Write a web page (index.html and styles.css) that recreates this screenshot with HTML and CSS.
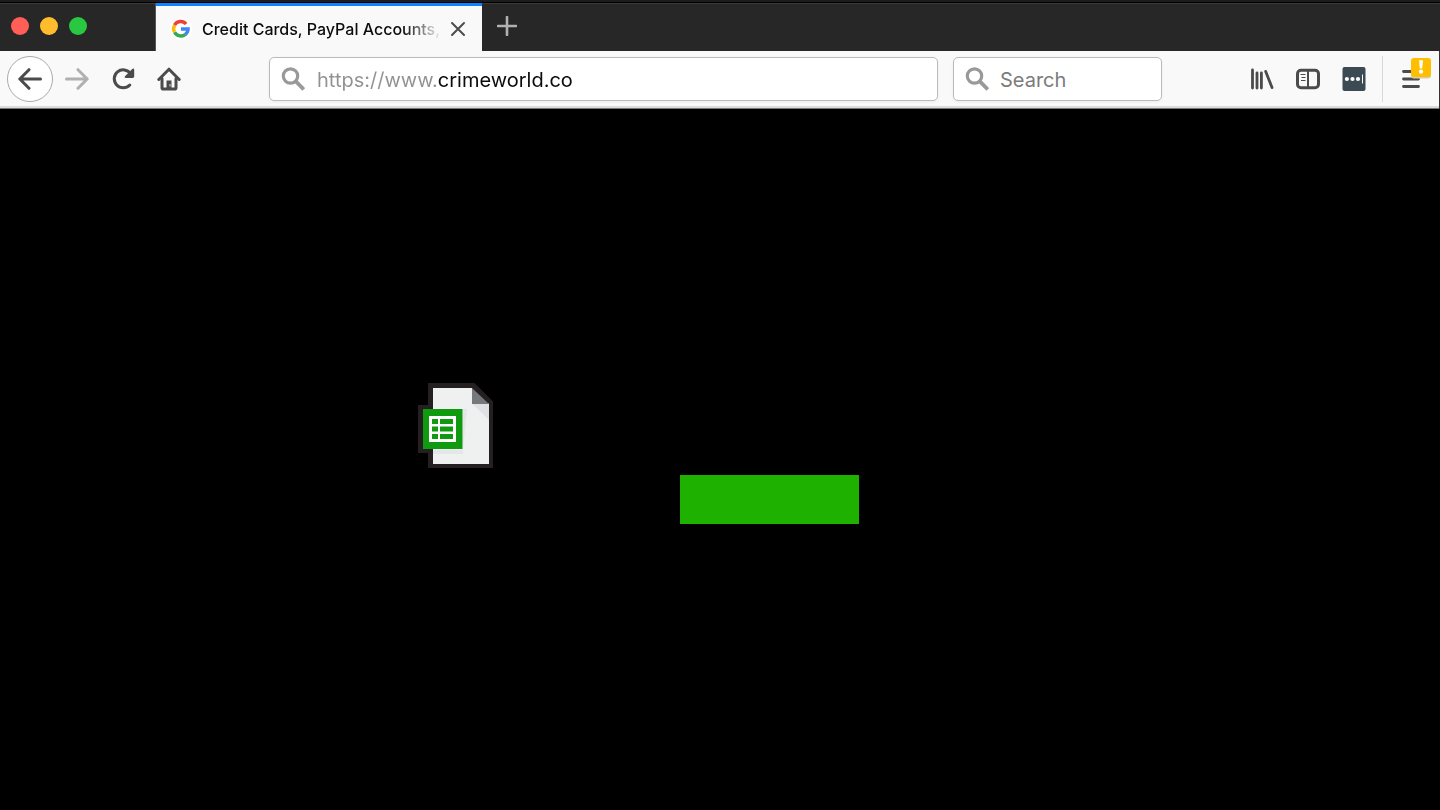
FILE: index.html
```html
<!DOCTYPE html>
<html lang="en">
<head>
<meta charset="utf-8">
<title>Credit Cards, PayPal Accounts</title>
<link rel="stylesheet" href="styles.css">
</head>
<body>
<div class="browser">
  <header class="tab-strip">
    <div class="window-controls">
      <button class="light light-close" aria-label="Close window"></button>
      <button class="light light-minimize" aria-label="Minimize window"></button>
      <button class="light light-zoom" aria-label="Zoom window"></button>
    </div>
    <div class="tab">
      <svg class="favicon" viewBox="0 0 22 22" aria-hidden="true">
        <circle cx="11" cy="11" r="11" fill="#fff"/>
        <g fill="none" stroke-width="3.4">
          <path d="M4.5 7.1A7.1 7.1 0 0 1 16.1 6" stroke="#ea4335"/>
          <path d="M4.6 14.2A7.1 7.1 0 0 1 4.6 7.1" stroke="#fbbc05"/>
          <path d="M15.6 16.2A7.1 7.1 0 0 1 4.6 14.2" stroke="#34a853"/>
          <path d="M11 11h7.1A7.1 7.1 0 0 1 15.4 16.3" stroke="#4285f4"/>
        </g>
      </svg>
      <span class="tab-title">Credit Cards, PayPal Accounts,</span>
      <button class="tab-close" aria-label="Close tab">
        <svg viewBox="0 0 16 16" width="16" height="16"><path d="M2 2l12 12M14 2L2 14" stroke="#4c4c4c" stroke-width="2" stroke-linecap="round"/></svg>
      </button>
    </div>
    <button class="new-tab" aria-label="New tab">
      <svg viewBox="0 0 20 20" width="20" height="20"><path d="M10 1v18M1 10h18" stroke="#b1b1b1" stroke-width="2.6" stroke-linecap="round"/></svg>
    </button>
  </header>

  <nav class="toolbar">
    <div class="navigation">
      <button class="tool back" aria-label="Back">
        <svg viewBox="0 0 24 24" width="24" height="24" fill="none" stroke="#4b4b4b" stroke-width="3" stroke-linecap="round" stroke-linejoin="round"><path d="M22.500 12H2M11 2.700L1.800 12l9.200 9.300"/></svg>
      </button>
      <button class="tool" aria-label="Forward" disabled>
        <svg viewBox="0 0 24 24" width="24" height="24" fill="none" stroke="#b0b0b0" stroke-width="3" stroke-linecap="round" stroke-linejoin="round"><path d="M1.500 12H22M13 2.700l9.200 9.300-9.200 9.300"/></svg>
      </button>
      <button class="tool" aria-label="Reload">
        <svg viewBox="0 0 24 24" width="24" height="24"><path d="M19.500 6.500A9 9 0 1 0 18.800 18" fill="none" stroke="#4b4b4b" stroke-width="3" stroke-linecap="round"/><path d="M21.200 1.900q2-1 2 1v6.600q0 1.400-1.400 1.400h-7q-2.200-.2-.6-1.800z" fill="#4b4b4b"/></svg>
      </button>
      <button class="tool" aria-label="Home">
        <svg viewBox="0 0 24 24" width="24" height="24"><g fill="none" stroke="#4b4b4b" stroke-width="3" stroke-linecap="round" stroke-linejoin="round"><path d="M1.800 12.500L12 2.200l10.200 10.300"/><path d="M5 11.500v9.200q0 1.300 1.300 1.300h11.400q1.300 0 1.300-1.300v-9.200"/></g><path d="M9.500 22v-8.500h5V22z" fill="#4b4b4b"/><path d="M12.500 17h1v2.400h-1z" fill="#ddd"/></svg>
      </button>
    </div>
    <label class="field address">
      <svg class="lens" viewBox="0 0 24 24" width="24" height="24" fill="none" stroke="#999" stroke-width="3.2"><circle cx="9.500" cy="9" r="7.2"/><path d="M14.600 14.200l8.200 8.200" stroke-width="3.8"/></svg>
      <input class="url" type="text" aria-label="Address" value="https://www.crimeworld.co" spellcheck="false">
    </label>
    <label class="field search">
      <svg class="lens" viewBox="0 0 24 24" width="24" height="24" fill="none" stroke="#999" stroke-width="3.2"><circle cx="9.500" cy="9" r="7.2"/><path d="M14.600 14.200l8.200 8.200" stroke-width="3.8"/></svg>
      <input class="query" type="text" aria-label="Search" placeholder="Search">
    </label>
    <div class="extras">
      <button class="tool" aria-label="Library">
        <svg viewBox="0 0 24 22" width="24" height="22" fill="none" stroke="#4b4b4b" stroke-width="2.8" stroke-linecap="round"><path d="M2.500 2v18M7 5v15M11.400 5v15M15.700 3.400L22 19.600"/></svg>
      </button>
      <button class="tool" aria-label="Sidebars">
        <svg viewBox="0 0 24 22" width="24" height="22" fill="none" stroke="#4b4b4b"><rect x="1.500" y="2.300" width="21" height="17.400" rx="3.4" stroke-width="3"/><path d="M12 3v16" stroke-width="2"/><path d="M4.500 6.500h5M5.500 9.500h4M5 12.500h4.500" stroke-width="1.2"/></svg>
      </button>
      <button class="tool" aria-label="Password manager">
        <svg viewBox="0 0 24 24" width="24" height="24"><rect x=".5" width="23" height="24" rx="2" fill="#3c4a54"/><g fill="#fff"><circle cx="4.900" cy="12" r="2.1"/><circle cx="10.500" cy="12" r="2.1"/><circle cx="16" cy="12" r="2.1"/><path d="M20 7.500h1v9h-1z"/></g></svg>
      </button>
    </div>
    <div class="menu-area">
      <button class="tool menu" aria-label="Open menu">
        <svg viewBox="0 0 20 20" width="20" height="20" stroke="#4b4b4b" stroke-width="2.8" stroke-linecap="round"><path d="M2.500 2.500h15M2.500 10h15M2.500 17.500h15"/></svg>
        <svg class="badge" viewBox="0 0 22 22" width="22" height="22" aria-hidden="true"><rect x="1" y="2" width="20" height="19.500" rx="3" fill="#d8cdb0"/><rect x="1" y="1" width="20" height="19" rx="3" fill="#ffbf00"/><path d="M9 3.300h4l-.8 8.200H9.800z" fill="#fff"/><circle cx="11" cy="14.600" r="2.2" fill="#fff"/></svg>
      </button>
    </div>
  </nav>

  <main class="stage">
    <svg class="document" viewBox="0 0 76 86" width="76" height="86" role="img" aria-label="Spreadsheet document">
      <path d="M10 0h46.500L75 18.500V85H10V70H0V22h10z" fill="#242021"/>
      <path d="M15 5h39v16h17v60H15z" fill="#eff1f1"/>
      <path d="M49 26h-4v45H15v-4h30z" fill="#e4e6e7"/>
      <path d="M54 20.500h17V37z" fill="#dfe1e3"/>
      <path d="M54 5l17 16H54z" fill="#76797c"/>
      <path d="M5 26h39.500v40H5z" fill="#109a10"/>
      <path d="M11 33h27v26H11z" fill="#fff"/>
      <path d="M14 36h6v5h-6zM22 36h13v5H22zM14 43.500h6v5h-6zM22 43.500h13v5H22zM14 51h6v5h-6zM22 51h13v5H22z" fill="#109a10"/>
    </svg>
    <div class="block"></div>
  </main>
</div>
</body>
</html>
```
FILE: styles.css
```css
* {
  box-sizing: border-box;
}

body {
  margin: 0;
  background: #000;
  font-family: Inter, Roboto, "Liberation Sans", sans-serif;
}

button {
  padding: 0;
  border: 0;
  background: none;
}

svg {
  display: block;
  flex: none;
}

.browser {
  display: flex;
  flex-direction: column;
  min-height: 100vh;
}

.tab-strip {
  display: flex;
  height: 51px;
  padding-top: 3px;
  background: linear-gradient(#1d1b1b 0 2px, #000 2px 3px, #3a3a3a 3px 4px, #272727 4px);
}

.window-controls {
  display: flex;
  align-items: center;
  gap: 11px;
  width: 156px;
  padding: 0 0 2px 11px;
  border-right: 1px solid #555;
}

.light {
  width: 18px;
  height: 18px;
  border-radius: 50%;
}

.light-close {
  background: #ff5f57;
}

.light-minimize {
  background: #ffbd2e;
}

.light-zoom {
  background: #28c940;
}

.tab {
  display: flex;
  align-items: center;
  width: 326px;
  padding: 0 14px;
  border-top: 3px solid #0a84ff;
  background: #f9f9fa;
}

.favicon {
  width: 22px;
  height: 22px;
}

.tab-title {
  flex: 1;
  margin: 0 8px 0 10px;
  font-size: 16px;
  font-weight: 500;
  line-height: 24px;
  white-space: nowrap;
  color: #0c0c0d;
  mask-image: linear-gradient(to right, #000 84%, transparent);
}

.tab-close {
  width: 18px;
}

.new-tab {
  display: grid;
  place-items: center;
  width: 50px;
  padding-bottom: 2px;
}

.toolbar {
  display: flex;
  align-items: center;
  height: 58px;
  padding: 0 5px 2px 7px;
  border-right: 1px solid #333;
  background: linear-gradient(#f9f9fa 0 55px, #dcdcdc 55px 57px, #777 57px);
}

.navigation {
  display: flex;
}

.tool {
  display: grid;
  flex: none;
  place-items: center;
  width: 46px;
  height: 46px;
}

.back {
  margin-right: 1px;
  border: 1px solid #aaa;
  border-radius: 50%;
  background: #fff;
}

.field {
  display: flex;
  align-items: center;
  height: 44px;
  padding: 0 12px 0 11px;
  border: 1px solid #bbb;
  border-radius: 5px;
  background: #fff;
  box-shadow: 0 1px 3px rgba(0, 0, 0, 0.06);
}

.address {
  flex: 1;
  margin: 0 15px 0 77px;
}

.search {
  flex: none;
  width: 209px;
}

.field input {
  flex: 1;
  min-width: 0;
  height: 32px;
  padding: 2px 0 0;
  border: 0;
  outline: 0;
  background: none;
  font-family: inherit;
  font-size: 20px;
  line-height: 30px;
}

.field .url {
  margin-left: 12px;
  color: transparent;
  background: linear-gradient(to right, #919191 0 120px, #0c0c0d 120px);
  background-clip: text;
}

.field .query {
  margin-left: 11px;
  color: #0c0c0d;
}

.query::placeholder {
  color: #7b7b7b;
  opacity: 1;
}

.extras {
  display: flex;
  margin-left: 77px;
}

.menu-area {
  margin-left: 5px;
  padding-left: 5px;
  border-left: 1px solid #d8d8d8;
}

.menu {
  position: relative;
}

.badge {
  position: absolute;
  top: 1px;
  right: 2px;
}

.stage {
  position: relative;
  flex: 1;
  background: #000;
}

.document {
  position: absolute;
  top: 274px;
  left: 418px;
}

.block {
  position: absolute;
  top: 366px;
  left: 680px;
  width: 179px;
  height: 49px;
  background: #1fb100;
}
```
